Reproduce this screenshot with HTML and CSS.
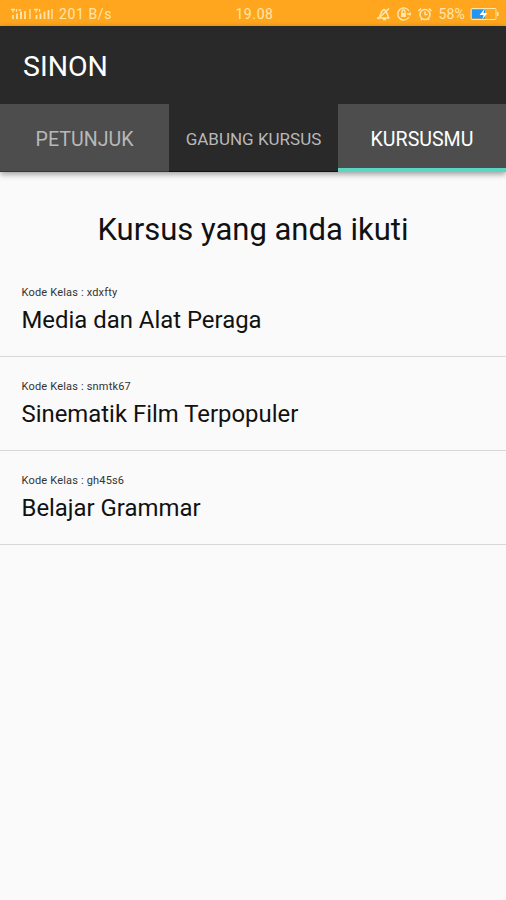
FILE: index.html
```html
<!DOCTYPE html>
<html lang="id">
<head>
    <meta charset="UTF-8">
    <meta name="viewport" content="width=device-width, initial-scale=1.0">
    <title>SINON</title>
    <link rel="stylesheet" href="styles.css">
</head>
<body>
    <div class="status-bar">
        <div class="status-left">
            <svg class="signal" width="44" height="14" viewBox="0 0 44 14" fill="none" stroke="currentColor">
                <path stroke-width="1.3" d="M1 2.5h4M3 2.5v3M6.5 2v3M8.5 3h2.5M24 2.5h4M26 2.5v3M29.5 2v3"/>
                <path stroke-width="1.8" d="M3 12V8M7 12V6.5M11 12V4.5M15 12V4M26.5 12V8M30.5 12V6.5M34.5 12V4.5M38.5 12V3"/>
                <path stroke-width="1.3" d="M20 2v10M42 2v10"/>
            </svg>
            <span class="speed">201 B/s</span>
        </div>
        <span class="clock">19.08</span>
        <div class="status-right">
            <svg width="15" height="14" viewBox="0 0 15 14" fill="none" stroke="currentColor" stroke-width="1.5">
                <path d="M1 11h12.5M3 10.5C5 8 4.500 4 8 2.5c3 1 3 5 4.500 8M7 12.500h3M2 12L13 1.5"/>
            </svg>
            <svg width="16" height="14" viewBox="0 0 16 14" fill="none" stroke="currentColor" stroke-width="1.4">
                <path d="M13 4A6 6 0 1 0 13 10M14 5.5v3"/>
                <rect x="5" y="6" width="5" height="4" fill="currentColor" stroke="none"/>
                <path d="M6 6V4.5a1.5 1.5 0 0 1 3 0V6M11 7h4"/>
            </svg>
            <svg width="16" height="14" viewBox="0 0 16 14" fill="none" stroke="currentColor" stroke-width="1.5">
                <circle cx="8" cy="7.5" r="5"/>
                <path d="M8 4.5v3h2.5M1.5 4L4 1.5M14.5 4L12 1.5M4 13l1-1.500M12 13l-1-1.500"/>
            </svg>
            <span class="percent">58%</span>
            <svg class="battery" width="29" height="14" viewBox="0 0 29 14">
                <rect x="1" y="1.5" width="25" height="11" rx="1" fill="none" stroke="currentColor"/>
                <rect x="2" y="2.5" width="13" height="9" fill="#2196f3"/>
                <path d="M27 5h1.5v4H27z" fill="currentColor"/>
                <path d="M14.5 2L9.5 8h4l-1 4 5-6h-4z" fill="#fff"/>
            </svg>
        </div>
    </div>

    <header>
        <h1>SINON</h1>
        <nav class="tabs">
            <a class="tab">PETUNJUK</a>
            <a class="tab tab-middle">GABUNG KURSUS</a>
            <a class="tab tab-active">KURSUSMU</a>
        </nav>
    </header>

    <main>
        <h2>Kursus yang anda ikuti</h2>
        <ul class="courses">
            <li>
                <p class="code">Kode Kelas : xdxfty</p>
                <p class="name">Media dan Alat Peraga</p>
            </li>
            <li>
                <p class="code">Kode Kelas : snmtk67</p>
                <p class="name">Sinematik Film Terpopuler</p>
            </li>
            <li>
                <p class="code">Kode Kelas : gh45s6</p>
                <p class="name">Belajar Grammar</p>
            </li>
        </ul>
    </main>
</body>
</html>
```
FILE: styles.css
```css
* {
    box-sizing: border-box;
}

body {
    margin: 0;
    min-height: 900px;
    font-family: Roboto, sans-serif;
    background: #fafafa;
    color: #111;
}

h1, h2, p, ul {
    margin: 0;
    padding: 0;
    font-weight: 400;
}

.status-bar {
    display: grid;
    grid-template-columns: 1fr auto 1fr;
    align-items: center;
    height: 26px;
    padding: 1px 7px 0 10px;
    background: #ffa61e;
    color: #ffe7ac;
    font-size: 14px;
}

.status-left, .status-right {
    display: flex;
    align-items: center;
}

.status-left {
    gap: 5px;
}

.status-right {
    justify-content: flex-end;
    gap: 5px;
}

.speed {
    letter-spacing: 0.6px;
}

.clock {
    letter-spacing: 0.6px;
}

.percent {
    letter-spacing: 0.2px;
}

header {
    height: 146px;
    background: #292929;
    box-shadow: 0 2px 6px rgba(0, 0, 0, 0.4);
}

h1 {
    height: 78px;
    padding-left: 23px;
    font-size: 28.5px;
    line-height: 82px;
    color: #fff;
}

.tabs {
    display: grid;
    grid-template-columns: 169px 169px 1fr;
    height: 68px;
}

.tab {
    display: flex;
    align-items: center;
    justify-content: center;
    padding-top: 3px;
    background: #4d4d4d;
    border-bottom: 1px solid #383838;
    color: #b8b8b8;
    font-size: 19.6px;
}

.tab-middle {
    background: #292929;
    border-bottom-color: #111;
    font-size: 17px;
}

.tab-active {
    padding-top: 6px;
    border-bottom: 4px solid #5bd6c2;
    color: #fff;
}

h2 {
    padding-top: 39px;
    font-size: 31px;
    line-height: 38px;
    text-align: center;
}

.courses {
    margin-top: 14px;
    list-style: none;
}

.courses li {
    height: 94px;
    padding: 23px 21.5px 0;
    border-bottom: 1px solid #d8d8d8;
}

.code {
    font-size: 11px;
    line-height: 14px;
    letter-spacing: 0.18px;
    color: #333;
}

.name {
    margin-top: 6px;
    font-size: 23.9px;
    line-height: 28px;
}
```
